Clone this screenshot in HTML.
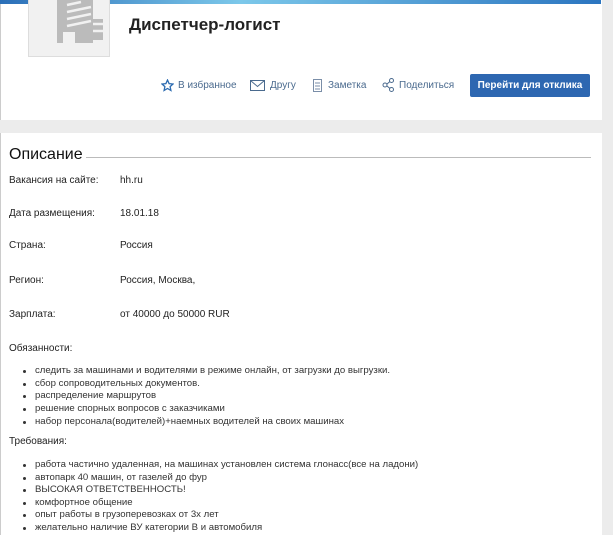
<!DOCTYPE html>
<html><head><meta charset="utf-8"><style>
body{margin:0;width:613px;height:535px;overflow:hidden;background:#ececec;font-family:"Liberation Sans",Arial,sans-serif;position:relative}
.a{position:absolute}
.card1{left:0;top:0;width:601px;height:120px;background:#fff;border-left:1px solid #ccc}
.strip{left:0;top:0;width:601px;height:4px;background:linear-gradient(90deg,#2b6fb8,#7cc8ea 40%,#2b75c0)}
.logo{left:28px;top:0;width:80px;height:56px;background:#f1f1f1;border:1px solid #ddd;border-top:none}
.card2{left:0;top:133px;width:601px;height:402px;background:#fff;border-left:1px solid #ccc}
.t{font-size:10px;color:#222;white-space:nowrap}
.act{font-size:10px;color:#4a6a8e;top:80px}
ul{margin:0;padding:0;list-style:none}
li{position:absolute;left:35px;font-size:9.6px;color:#333;white-space:nowrap}
li:before{content:"";position:absolute;left:-12px;top:5px;width:3px;height:3px;background:#333;border-radius:50%}
</style></head><body>
<div class="a card1"></div>
<div class="a strip"></div>
<div class="a logo"><svg width="80" height="56"><g fill="#bbb"><rect x="28" y="0" width="36" height="43"/><rect x="64" y="19" width="10" height="21"/></g><g stroke="#f1f1f1" stroke-width="2.5"><path d="M38 5L52 2M38 12L62 7M38 19L62 14M38 26L62 21M64 24h10M64 31h10"/></g><rect x="34" y="32" width="12" height="11" fill="#f1f1f1"/></svg></div>
<div class="a" style="left:129px;top:15px;font-size:17px;font-weight:bold;color:#222">Диспетчер-логист</div>
<svg class="a" style="left:161px;top:79px" width="13" height="13"><path d="M6.5 1l1.6 3.6 3.9.4-2.9 2.6.8 3.9-3.4-2-3.4 2 .8-3.9L1 5l3.9-.4z" fill="none" stroke="#2a6ab0" stroke-width="1.3"/></svg>
<div class="a act" style="left:178px">В избранное</div>
<svg class="a" style="left:250px;top:80px" width="15" height="11"><rect x=".5" y=".5" width="14" height="10" fill="none" stroke="#4a6a8e"/><path d="M.5 .5l7 6 7-6" fill="none" stroke="#4a6a8e"/></svg>
<div class="a act" style="left:270px">Другу</div>
<svg class="a" style="left:313px;top:78px" width="9" height="14"><rect x=".5" y="1.5" width="8" height="12" fill="none" stroke="#7a8ea8"/><path d="M2 5h5M2 8h5M2 11h5" stroke="#7a8ea8"/></svg>
<div class="a act" style="left:328px">Заметка</div>
<svg class="a" style="left:382px;top:78px" width="12" height="14"><g fill="none" stroke="#4a6a8e"><circle cx="3" cy="7" r="2"/><circle cx="9.5" cy="2.5" r="2"/><circle cx="9.5" cy="11.5" r="2"/><path d="M5 6l3-2.5M5 8l3 2.5"/></g></svg>
<div class="a act" style="left:399px">Поделиться</div>
<div class="a" style="left:470px;top:74px;width:120px;height:23px;background:#2d67b1;border-radius:2px;color:#fff;font-size:10px;font-weight:bold;text-align:center;line-height:23px">Перейти для отклика</div>
<div class="a card2"></div>
<div class="a" style="left:9px;top:146px;font-size:16px;color:#111">Описание</div>
<div class="a" style="left:86px;top:157px;width:505px;height:1px;background:#bbb"></div>
<div class="a t" style="left:9px;top:175px">Вакансия на сайте:</div><div class="a t" style="left:120px;top:175px">hh.ru</div>
<div class="a t" style="left:9px;top:208px">Дата размещения:</div><div class="a t" style="left:120px;top:208px">18.01.18</div>
<div class="a t" style="left:9px;top:240px">Страна:</div><div class="a t" style="left:120px;top:240px">Россия</div>
<div class="a t" style="left:9px;top:275px">Регион:</div><div class="a t" style="left:120px;top:275px">Россия, Москва,</div>
<div class="a t" style="left:9px;top:309px">Зарплата:</div><div class="a t" style="left:120px;top:309px">от 40000 до 50000 RUR</div>
<div class="a t" style="left:9px;top:343px">Обязанности:</div>
<ul>
<li style="top:365px">следить за машинами и водителями в режиме онлайн, от загрузки до выгрузки.</li>
<li style="top:378px">сбор сопроводительных документов.</li>
<li style="top:390px">распределение маршрутов</li>
<li style="top:403px">решение спорных вопросов с заказчиками</li>
<li style="top:416px">набор персонала(водителей)+наемных водителей на своих машинах</li>
</ul>
<div class="a t" style="left:9px;top:436px">Требования:</div>
<ul>
<li style="top:459px">работа частично удаленная, на машинах установлен система глонасс(все на ладони)</li>
<li style="top:472px">автопарк 40 машин, от газелей до фур</li>
<li style="top:484px">ВЫСОКАЯ ОТВЕТСТВЕННОСТЬ!</li>
<li style="top:497px">комфортное общение</li>
<li style="top:509px">опыт работы в грузоперевозках от 3х лет</li>
<li style="top:522px">желательно наличие ВУ категории В и автомобиля</li>
</ul>
</body></html>
